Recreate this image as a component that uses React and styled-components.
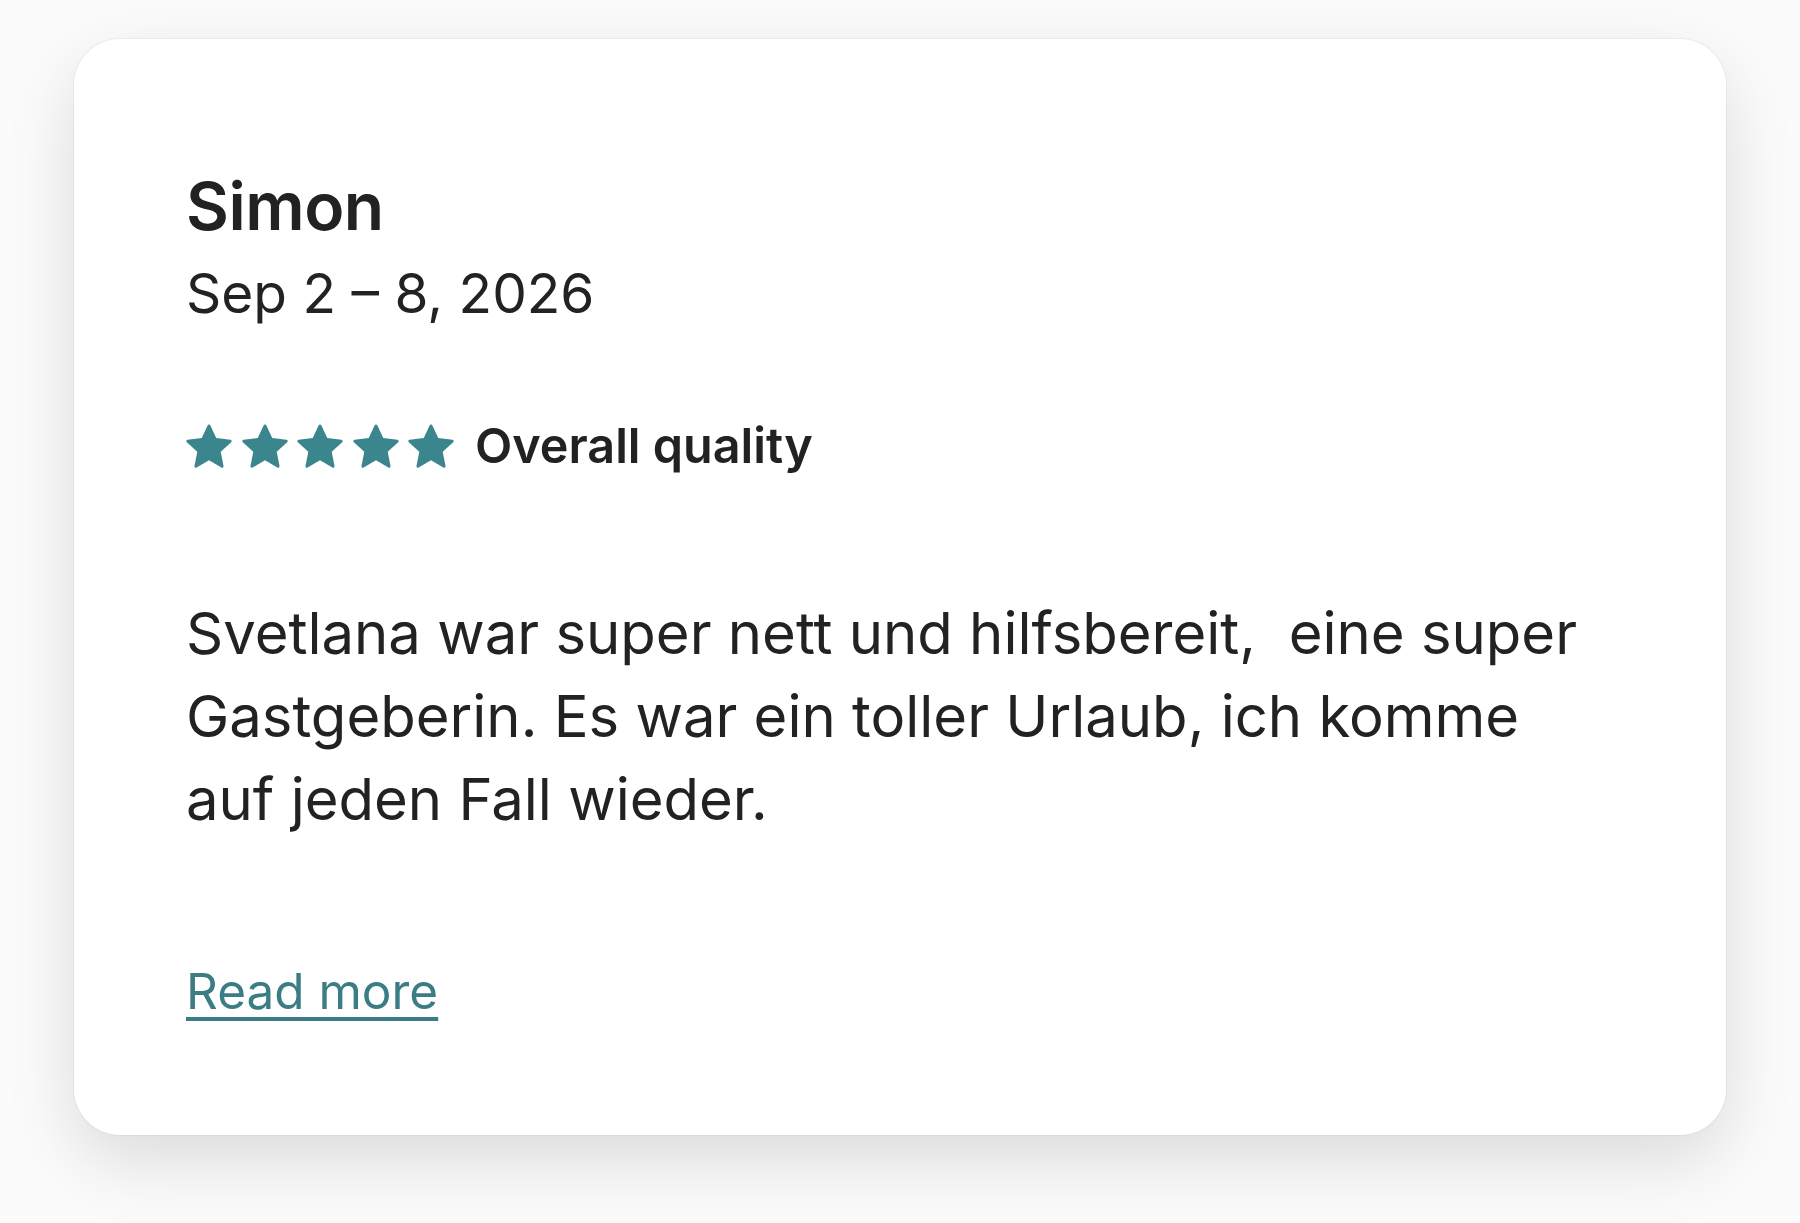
import React from "react";
import styled, { createGlobalStyle } from "styled-components";

const GlobalStyle = createGlobalStyle`
  html, body {
    margin: 0;
    padding: 0;
    background: #ffffff;
  }
  body {
    font-family: Inter, "Noto Sans", "Liberation Sans", sans-serif;
    color: #222222;
  }
`;

const Page = styled.div`
  padding: 39px 74px 89px;
  min-height: 100vh;
  box-sizing: border-box;
  background: #fbfbfb;
`;

const Card = styled.article`
  background: #ffffff;
  border-radius: 46px;
  padding: 127px 110px 116px 112px;
  box-shadow: 0 26px 70px rgba(0, 0, 0, 0.13), 0 0 0 1px rgba(0, 0, 0, 0.04);
`;

const Name = styled.h2`
  margin: 0;
  font-size: 66px;
  line-height: 80px;
  font-weight: 600;
  letter-spacing: -0.5px;
`;

const Dates = styled.div`
  margin-top: 14px;
  font-size: 55px;
  line-height: 66px;
  font-weight: 400;
`;

const RatingRow = styled.div`
  margin-top: 92px;
  display: flex;
  align-items: center;
  gap: 21px;
  height: 56px;
`;

const Stars = styled.div`
  display: flex;
  gap: 9.5px;
  color: #3a868c;
`;

const Star = styled.svg`
  width: 46px;
  height: 46px;
  display: block;
  fill: currentColor;
`;

const RatingLabel = styled.span`
  font-size: 48.5px;
  line-height: 56px;
  font-weight: 600;
`;

const Body = styled.p`
  margin: 118px 0 0;
  font-size: 58px;
  line-height: 83px;
  font-weight: 400;
`;

const ReadMore = styled.a`
  display: inline-block;
  margin-top: 122px;
  font-size: 49.5px;
  line-height: 56px;
  color: #3a7d85;
  text-decoration: underline;
  text-decoration-thickness: 4px;
  text-underline-offset: 8px;
  cursor: pointer;
`;

const StarIcon = () => (
  <Star viewBox="0 0 32 32" aria-hidden="true">
    <path d="M15.094 1.579l-4.124 8.885-9.86 1.27a1 1 0 0 0-.542 1.736l7.293 6.565-1.965 9.852a1 1 0 0 0 1.483 1.061L16 25.951l8.625 4.997a1 1 0 0 0 1.482-1.06l-1.965-9.853 7.293-6.565a1 1 0 0 0-.541-1.735l-9.86-1.271-4.127-8.885a1 1 0 0 0-1.814 0z" />
  </Star>
);

const review = {
  name: "Simon",
  dates: "Sep 2 – 8, 2026",
  rating: 5,
  label: "Overall quality",
  text: "Svetlana war super nett und hilfsbereit,\u00A0 eine super Gastgeberin. Es war ein toller Urlaub, ich komme auf jeden Fall wieder.",
};

export default function App() {
  return (
    <>
      <GlobalStyle />
      <Page>
        <Card>
          <Name>{review.name}</Name>
          <Dates>{review.dates}</Dates>
          <RatingRow>
            <Stars>
              {Array.from({ length: review.rating }).map((_, i) => (
                <StarIcon key={i} />
              ))}
            </Stars>
            <RatingLabel>{review.label}</RatingLabel>
          </RatingRow>
          <Body>{review.text}</Body>
          <ReadMore>Read more</ReadMore>
        </Card>
      </Page>
    </>
  );
}
